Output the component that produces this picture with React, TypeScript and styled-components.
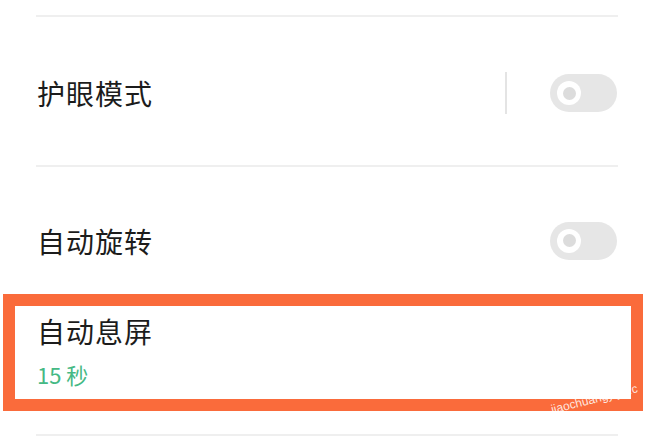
import * as React from 'react'
import styled, { createGlobalStyle } from 'styled-components'

const Global = createGlobalStyle`
  html, body { margin: 0; padding: 0; background: #fff; }
  body { font-family: "Noto Sans CJK SC", "Noto Sans", sans-serif; }
`

const Page = styled.div`
  position: relative;
  width: 650px;
  height: 437px;
  overflow: hidden;
  background: #fff;
  padding-top: 15px;
  box-sizing: border-box;
`

const Divider = styled.div`
  height: 2px;
  margin: 0 32px 0 36px;
  background: #efefef;
`

const Row = styled.div<{ h: number; pt?: number }>`
  display: flex;
  align-items: center;
  height: ${p => p.h}px;
  padding: ${p => p.pt ?? 0}px 33px 0 37px;
  box-sizing: border-box;
`

const Title = styled.div`
  font-size: 28px;
  color: #1c1c1c;
  letter-spacing: 1px;
  line-height: 1;
`

const Spacer = styled.div`
  flex: 1;
`

const Sep = styled.div`
  width: 2px;
  height: 42px;
  background: #e4e4e4;
  margin-right: 43px;
`

const Toggle = styled.div`
  position: relative;
  width: 67px;
  height: 38px;
  border-radius: 19px;
  background: #e6e6e6;
`

const Knob = styled.div`
  position: absolute;
  left: 7px;
  top: 7px;
  width: 24px;
  height: 24px;
  border-radius: 50%;
  background: #fff;
  display: flex;
  align-items: center;
  justify-content: center;
  &::after {
    content: '';
    width: 13px;
    height: 13px;
    border-radius: 50%;
    background: #dcdcdc;
  }
`

const Highlight = styled.div`
  margin: 0 7px 0 3px;
  height: 117px;
  border: 12px solid #fa6b3b;
  box-sizing: border-box;
  padding: 11px 0 0 22px;
  display: flex;
  flex-direction: column;
  align-items: flex-start;
`

const Sub = styled.div`
  margin-top: 18px;
  font-size: 22px;
  color: #45b984;
  line-height: 1;
`

const Watermark = styled.div`
  position: absolute;
  left: 550px;
  top: 392px;
  transform: rotate(-14deg);
  font-family: "Liberation Sans", sans-serif;
  font-size: 12px;
  color: rgba(255, 255, 255, 0.85);
  white-space: nowrap;
`

const Switch = () => (
  <Toggle>
    <Knob />
  </Toggle>
)

export default function App() {
  return (
    <Page>
      <Global />
      <Divider />
      <Row h={148} pt={4}>
        <Title>护眼模式</Title>
        <Spacer />
        <Sep />
        <Switch />
      </Row>
      <Divider />
      <Row h={127} pt={20}>
        <Title>自动旋转</Title>
        <Spacer />
        <Switch />
      </Row>
      <Highlight>
        <Title>自动息屏</Title>
        <Sub>15 秒</Sub>
      </Highlight>
      <div style={{ height: 23 }} />
      <Divider />
      <Watermark>jiaochuangyiya.c</Watermark>
    </Page>
  )
}
